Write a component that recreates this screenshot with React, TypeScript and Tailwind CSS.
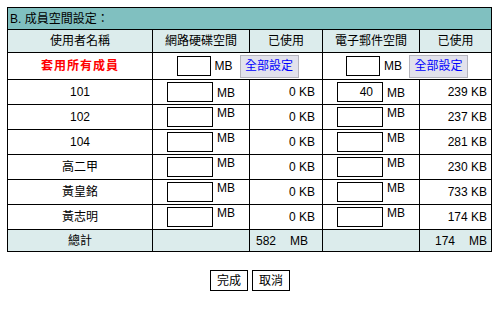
import React from 'react';

const rows = [
  { name: '101', disk: '', diskUsed: '0 KB', mail: '40', mailUsed: '239 KB' },
  { name: '102', disk: '', diskUsed: '0 KB', mail: '', mailUsed: '237 KB' },
  { name: '104', disk: '', diskUsed: '0 KB', mail: '', mailUsed: '281 KB' },
  { name: '高二甲', disk: '', diskUsed: '0 KB', mail: '', mailUsed: '230 KB' },
  { name: '黃皇銘', disk: '', diskUsed: '0 KB', mail: '', mailUsed: '733 KB' },
  { name: '黃志明', disk: '', diskUsed: '0 KB', mail: '', mailUsed: '174 KB' },
];

const QuotaInput: React.FC<{ value: string; raised: boolean }> = ({ value, raised }) => (
  <div className="h-[24px] bg-white flex items-start justify-center pt-[2px]">
    <input
      type="text"
      defaultValue={value}
      className="w-[46px] h-[20px] border border-black bg-white text-right pr-[9px] text-[12px] outline-none"
    />
    <span className={`ml-[4px] leading-[12px] ${raised ? 'mt-0' : 'mt-[5px]'}`}>MB</span>
  </div>
);

const SetAll: React.FC = () => (
  <div className="h-[26px] bg-white col-span-2 flex items-center justify-center">
    <input type="text" className="w-[34px] h-[20px] border border-black bg-white outline-none" />
    <span className="ml-[4px]">MB</span>
    <button className="ml-[7px] w-[59px] h-[23px] bg-[#e2e2ec] border border-[#b4b4bc] text-[#0000ff] text-[12px]">
      全部設定
    </button>
  </div>
);

export default function App() {
  return (
    <div className="w-[500px] h-[310px] bg-white p-[7px] text-[12px] text-black font-['Liberation_Sans','Noto_Sans_CJK_TC',sans-serif]">
      <div className="w-[485px] bg-black p-px grid grid-cols-[144px_96px_72px_96px_71px] gap-px">
        {/* title */}
        <div className="col-span-5 h-[21px] bg-[#80c0c0] pl-[2px] flex items-center">B. 成員空間設定：</div>

        {/* column headers */}
        {['使用者名稱', '網路硬碟空間', '已使用', '電子郵件空間', '已使用'].map((h, i) => (
          <div key={i} className="h-[22px] bg-[#dcecec] flex items-center justify-center">{h}</div>
        ))}

        {/* apply to all */}
        <div className="h-[26px] bg-white flex items-center justify-center text-[#ff0000] font-bold tracking-[1px]">套用所有成員</div>
        <SetAll />
        <SetAll />

        {rows.map((r, i) => (
          <React.Fragment key={r.name}>
            <div className="h-[24px] bg-white flex items-center justify-center">{r.name}</div>
            <QuotaInput value={r.disk} raised={i !== 0} />
            <div className="h-[24px] bg-white flex items-center justify-end pr-[7px]">{r.diskUsed}</div>
            <QuotaInput value={r.mail} raised={i !== 0} />
            <div className="h-[24px] bg-white flex items-center justify-end pr-[4px]">{r.mailUsed}</div>
          </React.Fragment>
        ))}

        {/* totals */}
        <div className="h-[21px] bg-[#dcecec] flex items-center justify-center">總計</div>
        <div className="h-[21px] bg-[#dcecec]"></div>
        <div className="h-[21px] bg-[#dcecec] flex items-center pl-[6px]">
          582<span className="ml-[14px]">MB</span>
        </div>
        <div className="h-[21px] bg-[#dcecec]"></div>
        <div className="h-[21px] bg-[#dcecec] flex items-center justify-end pr-[4px]">
          174<span className="ml-[14px]">MB</span>
        </div>
      </div>

      <div className="mt-[18px] flex justify-center gap-[4px]">
        <button className="w-[38px] h-[21px] border border-black bg-white text-[12px]">完成</button>
        <button className="w-[38px] h-[21px] border border-black bg-white text-[12px]">取消</button>
      </div>
    </div>
  );
}
